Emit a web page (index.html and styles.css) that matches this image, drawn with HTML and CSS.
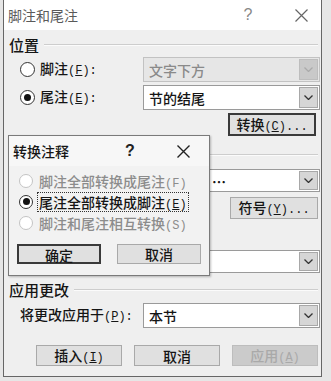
FILE: index.html
```html
<!DOCTYPE html>
<html lang="zh-CN">
<head>
<meta charset="utf-8">
<title>脚注和尾注</title>
<link rel="stylesheet" href="styles.css">
</head>
<body>
<div class="dialog">
  <div class="titlebar">
    <span class="title">脚注和尾注</span>
    <span class="help">?</span>
    <span class="close"><svg width="13" height="13" viewBox="0 0 13 13"><path d="M0.5 0.5L12.5 12.5M12.5 0.5L0.5 12.5" stroke="#666" stroke-width="1.2" fill="none"/></svg></span>
  </div>
  <div class="body">
    <div class="head"><span>位置</span><i class="rule"></i></div>
    <div class="row r25 first">
      <span class="radio"></span>
      <span class="label">脚注<span class="key">(<u>F</u>):</span></span>
      <div class="select disabled"><span class="val">文字下方</span><span class="arrow"><svg width="9" height="5" viewBox="0 0 9 5"><polyline points="0.5,0.5 4.5,4.5 8.5,0.5" fill="none" stroke="#aaa" stroke-width="1.3"/></svg></span></div>
    </div>
    <div class="row r25 gap3">
      <span class="radio on"></span>
      <span class="label">尾注<span class="key">(<u>E</u>):</span></span>
      <div class="select"><span class="val">节的结尾</span><span class="arrow"><svg width="9" height="5" viewBox="0 0 9 5"><polyline points="0.5,0.5 4.5,4.5 8.5,0.5" fill="none" stroke="#333" stroke-width="1.3"/></svg></span></div>
    </div>
    <div class="row btnrow gap3">
      <button class="btn default wide">转换<span class="key">(<u>C</u>)...</span></button>
    </div>
    <div class="head h2"><span class="ghost"></span><i class="rule"></i></div>
    <div class="row r23 gap4">
      <div class="select"><span class="val covered">…</span><span class="arrow"><svg width="9" height="5" viewBox="0 0 9 5"><polyline points="0.5,0.5 4.5,4.5 8.5,0.5" fill="none" stroke="#333" stroke-width="1.3"/></svg></span></div>
    </div>
    <div class="row r22 gap5">
      <span class="input"></span>
      <button class="btn wide">符号<span class="key">(<u>Y</u>)...</span></button>
    </div>
    <div class="row r23 gap4">
      <span class="spin"></span>
    </div>
    <div class="row r23 gap4">
      <div class="select"><span class="val"></span><span class="arrow"><svg width="9" height="5" viewBox="0 0 9 5"><polyline points="0.5,0.5 4.5,4.5 8.5,0.5" fill="none" stroke="#333" stroke-width="1.3"/></svg></span></div>
    </div>
    <div class="head h3"><span>应用更改</span><i class="rule"></i></div>
    <div class="row r25 gap3">
      <span class="label flat">将更改应用于<span class="key">(<u>P</u>):</span></span>
      <div class="select"><span class="val">本节</span><span class="arrow"><svg width="9" height="5" viewBox="0 0 9 5"><polyline points="0.5,0.5 4.5,4.5 8.5,0.5" fill="none" stroke="#333" stroke-width="1.3"/></svg></span></div>
    </div>
    <div class="actions">
      <button class="btn act">插入<span class="key">(<u>I</u>)</span></button>
      <button class="btn act">取消</button>
      <button class="btn act off">应用<span class="key">(<u>A</u>)</span></button>
    </div>
  </div>

  <div class="popup">
    <div class="ptitle">
      <span class="title dark">转换注释</span>
      <span class="help dark">?</span>
      <span class="close pclose"><svg width="13" height="13" viewBox="0 0 13 13"><path d="M0.5 0.5L12.5 12.5M12.5 0.5L0.5 12.5" stroke="#222" stroke-width="1.4" fill="none"/></svg></span>
    </div>
    <div class="pbody">
      <div class="prow dis"><span class="radio sm dis"></span><span class="plabel">脚注全部转换成尾注<span class="key">(F)</span></span></div>
      <div class="prow"><span class="radio sm on"></span><span class="plabel focus">尾注全部转换成脚注<span class="key">(<u>E</u>)</span></span></div>
      <div class="prow dis"><span class="radio sm dis"></span><span class="plabel">脚注和尾注相互转换<span class="key">(S)</span></span></div>
      <div class="pactions">
        <button class="btn default pbtn">确定</button>
        <button class="btn pbtn">取消</button>
      </div>
    </div>
  </div>
</div>
</body>
</html>
```

FILE: styles.css
```css
* { box-sizing: border-box; }
html, body { margin: 0; padding: 0; }
body {
  width: 331px;
  height: 381px;
  overflow: hidden;
  background: #e6e6e6;
  font-family: "Noto Sans CJK SC", "Noto Sans", sans-serif;
  font-size: 14px;
  font-weight: 500;
  line-height: 20px;
  color: #151515;
}
.dialog {
  position: relative;
  margin-left: 3px;
  width: 319px;
  border: 1px solid #666;
  border-top: none;
  background: #efefef;
}
.titlebar {
  height: 30px;
  background: #fff;
  display: flex;
  align-items: center;
  padding: 0 3px 0 4px;
}
.title { flex: 1; color: #5a5a5a; font-weight: 400; }
.title.dark { color: #151515; font-weight: 500; }
.help { width: 30px; text-align: center; color: #888; font-size: 16px; font-family: "Liberation Sans", sans-serif; }
.help.dark { color: #222; font-weight: bold; }
.close { width: 34px; margin-left: 21px; display: flex; justify-content: center; }
.body { padding: 5px 1px 10px 5px; }
.head { display: flex; align-items: center; height: 20px; font-size: 15px; }
.head.h2 { margin-top: 9px; }
.head.h3 { margin-top: 7px; }
.ghost { width: 30px; }
.rule {
  flex: 1;
  margin: 0 2px 0 5px;
  border-top: 1px solid #cdcdcd;
  border-bottom: 1px solid #fbfbfb;
}
.row { display: flex; align-items: center; padding-left: 11px; }
.r25 { height: 25px; }
.r23 { height: 23px; }
.r22 { height: 22px; }
.first { margin-top: 2px; }
.gap3 { margin-top: 3px; }
.gap4 { margin-top: 4px; }
.gap5 { margin-top: 5px; }
.btnrow { height: 23px; justify-content: flex-end; padding-right: 2px; }
.radio {
  width: 15px;
  height: 15px;
  border: 1px solid #333;
  border-radius: 50%;
  background: #fff;
  flex: none;
  display: flex;
  align-items: center;
  justify-content: center;
}
.radio.on::after {
  content: "";
  width: 7px;
  height: 7px;
  border-radius: 50%;
  background: #111;
}
.radio.sm { width: 14px; height: 14px; }
.radio.sm.on::after { width: 7px; height: 7px; }
.radio.dis { border-color: #c4c4c4; }
.label { margin-left: 5px; white-space: nowrap; }
.label.flat { margin-left: 0; }
.key { font-family: "Liberation Mono", monospace; font-size: 12px; font-weight: normal; }
.select {
  margin-left: auto;
  width: 177px;
  height: 100%;
  border: 1px solid #9a9a9a;
  background: #fff;
  display: flex;
  align-items: center;
  padding: 1px;
}
.select .val { flex: 1; padding-left: 4px; white-space: nowrap; }
.select .val.covered { padding-left: 67px; font-weight: bold; }
.select .arrow {
  width: 19px;
  height: 100%;
  background: #d6d6d6;
  border: 1px solid #a8a8a8;
  display: flex;
  align-items: center;
  justify-content: center;
}
.select.disabled { background: #e6e6e6; border-color: #c2c2c2; color: #8a8a8a; }
.select.disabled .arrow { background: #c9c9c9; border-color: #bdbdbd; }
.input { margin-left: 123px; width: 60px; height: 100%; background: #fff; border: 1px solid #9a9a9a; }
.spin { margin-left: 123px; width: 60px; height: 100%; background: #fff; border: 1px solid #9a9a9a; }
.btn {
  font: inherit;
  color: inherit;
  line-height: 18px;
  background: #e0e0e0;
  border: 1px solid #a9a9a9;
  padding: 0;
  margin: 0;
  height: 100%;
}
.btn.default { border: 2px solid #3a3a3a; }
.wide { width: 88px; margin-left: auto; margin-right: 2px; }
.actions {
  display: flex;
  justify-content: flex-end;
  gap: 12px;
  padding-right: 2px;
  margin-top: 17px;
  height: 21px;
}
.act { width: 86px; }
.act.off { background: #cbcbcb; border-color: #bdbdbd; color: #a9a9a9; }
.popup {
  position: absolute;
  left: 4px;
  top: 135px;
  width: 202px;
  height: 141px;
  border: 1px solid #7a7a7a;
  background: #f2f2f2;
  box-shadow: 1px 1px 2px rgba(0,0,0,0.25);
}
.ptitle {
  height: 30px;
  background: #f7f7f7;
  display: flex;
  align-items: center;
  padding: 0 11px 0 4px;
}
.pclose { width: 30px; margin-left: 23px; }
.pbody { padding: 4px 0 0 0; }
.prow { height: 21px; display: flex; align-items: center; padding-left: 10px; }
.prow.dis { color: #8c8c8c; }
.plabel { margin-left: 4px; padding: 0 1px; height: 20px; border: 1px solid transparent; line-height: 18px; white-space: nowrap; }
.plabel.focus { border: 1px dotted #333; }
.pactions { display: flex; gap: 16px; padding-left: 8px; margin-top: 11px; height: 20px; }
.pbtn { width: 84px; }
```
